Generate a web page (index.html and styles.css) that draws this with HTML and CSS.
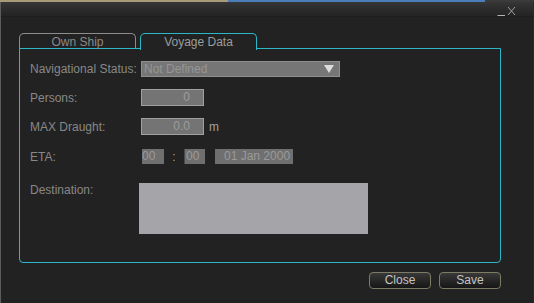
FILE: index.html
```html
<html>
  <head>
    <meta charset="UTF-8" />
    <link rel="stylesheet" href="styles.css">
  </head>
  <body>
    <div class="desk">
      <div class="deskTan"></div>
      <div class="deskBlue"></div>
    </div>
    <div class="window">
      <div class="titlebar">
        <svg class="winButtons" width="20" height="10" viewBox="0 0 20 10">
          <path d="M0.5 9.5 H8" stroke="#b4b4b4" stroke-width="1" />
          <path d="M11 1 L18 9 M18 1 L11 9" stroke="#a0a0a0" stroke-width="1" />
        </svg>
      </div>
      <div class="content">
        <div class="tabs">
          <div class="tab">Own Ship</div>
          <div class="tab tabActive">Voyage Data</div>
        </div>
        <div class="tabPanel">
          <div class="row rowStatus">
            <div class="label">Navigational Status:</div>
            <div class="select">
              <span>Not Defined</span>
              <svg width="10" height="8" viewBox="0 0 10 8"><path d="M0 0 H10 L5 8 Z" fill="#dcdcdc" /></svg>
            </div>
          </div>
          <div class="row rowPersons">
            <div class="label">Persons:</div>
            <div class="input">0</div>
          </div>
          <div class="row rowDraught">
            <div class="label">MAX Draught:</div>
            <div class="input">0.0</div>
            <div class="unit">m</div>
          </div>
          <div class="row rowEta">
            <div class="label">ETA:</div>
            <div class="etaBox etaHour">00</div>
            <div class="etaColon">:</div>
            <div class="etaBox etaMin">00</div>
            <div class="etaBox etaDate">01 Jan 2000</div>
          </div>
          <div class="row rowDest">
            <div class="label">Destination:</div>
            <div class="destination"></div>
          </div>
        </div>
        <div class="buttons">
          <div class="button">Close</div>
          <div class="button">Save</div>
        </div>
      </div>
    </div>
  </body>
</html>
```

FILE: styles.css
```css
body {
  margin: 0;
  width: 534px;
  height: 303px;
  overflow: hidden;
  background-color: #2a2a2a;
  font-family: 'Liberation Sans', Arial, sans-serif;
  font-size: 12px;
}
.desk {
  display: flex;
  height: 2px;
  background-color: #3a3a3a;
}
.deskTan {
  width: 228px;
  background-color: #a89c78;
}
.deskBlue {
  width: 257px;
  background-color: #4b7db8;
}
.window {
  height: 301px;
  margin-right: 1px;
  border-left: 1px solid #5c5c5c;
  background-color: #222222;
}
.titlebar {
  height: 14px;
  display: flex;
  justify-content: flex-end;
  align-items: flex-start;
  padding-right: 16px;
  background: linear-gradient(#363636, #2b2b2b 55%, #242424);
  border-bottom: 1px solid #1e1e1e;
}
.winButtons {
  margin-top: 4px;
}
.content {
  padding: 16px 32px 0 18px;
}
.tabs {
  display: flex;
  gap: 4px;
  height: 16px;
}
.tab {
  width: 115px;
  height: 15px;
  border: 1px solid #8c8c8c;
  border-bottom: none;
  border-radius: 5px 5px 0 0;
  text-align: center;
  line-height: 16px;
  color: #8a8a8a;
}
.tabActive {
  height: 16px;
  border-color: #2bb7c8;
  background-color: #222222;
  color: #9c9c9c;
  position: relative;
  z-index: 1;
}
.tabPanel {
  height: 201px;
  margin-top: -1px;
  padding: 12px 10px 0 10px;
  border: 1px solid #2bb7c8;
  border-radius: 0 0 4px 4px;
  color: #888888;
}
.row {
  display: flex;
  align-items: center;
}
.label {
  width: 111px;
}
.rowStatus {
  height: 16px;
}
.rowPersons {
  height: 17px;
  margin-top: 12px;
}
.rowDraught {
  height: 17px;
  margin-top: 12px;
}
.rowEta {
  height: 15px;
  margin-top: 14px;
}
.rowDest {
  align-items: flex-start;
  height: 51px;
  margin-top: 19px;
}
.select {
  box-sizing: border-box;
  width: 199px;
  height: 16px;
  display: flex;
  align-items: center;
  justify-content: space-between;
  padding: 0 5px 0 2px;
  background-color: #767676;
  border: 1px solid #8e8e8e;
  color: #959595;
}
.input {
  box-sizing: border-box;
  width: 63px;
  height: 17px;
  padding-right: 13px;
  text-align: right;
  line-height: 15px;
  background-color: #747474;
  border: 1px solid #a0a0a0;
  color: #9c9c9c;
}
.unit {
  margin-left: 5px;
  color: #a0a0a0;
}
.etaBox {
  box-sizing: border-box;
  height: 15px;
  line-height: 15px;
  background-color: #6f6f6f;
  color: #9a9a9a;
}
.etaHour {
  width: 22px;
  margin-left: 1px;
}
.etaColon {
  width: 20px;
  text-align: center;
  color: #a0a0a0;
}
.etaMin {
  width: 21px;
  padding-left: 1px;
  border-left: 1px solid #4a4a4a;
}
.etaDate {
  width: 78px;
  margin-left: 10px;
  padding-left: 9px;
}
.destination {
  width: 229px;
  height: 51px;
  margin-left: -2px;
  background-color: #a5a5a9;
}
.buttons {
  display: flex;
  justify-content: flex-end;
  gap: 8px;
  margin-top: 9px;
}
.button {
  box-sizing: border-box;
  width: 62px;
  height: 17px;
  line-height: 15px;
  text-align: center;
  border: 1px solid #7e7b64;
  border-radius: 4px;
  background: linear-gradient(#383838, #161616);
  color: #c4c4c4;
}
```
